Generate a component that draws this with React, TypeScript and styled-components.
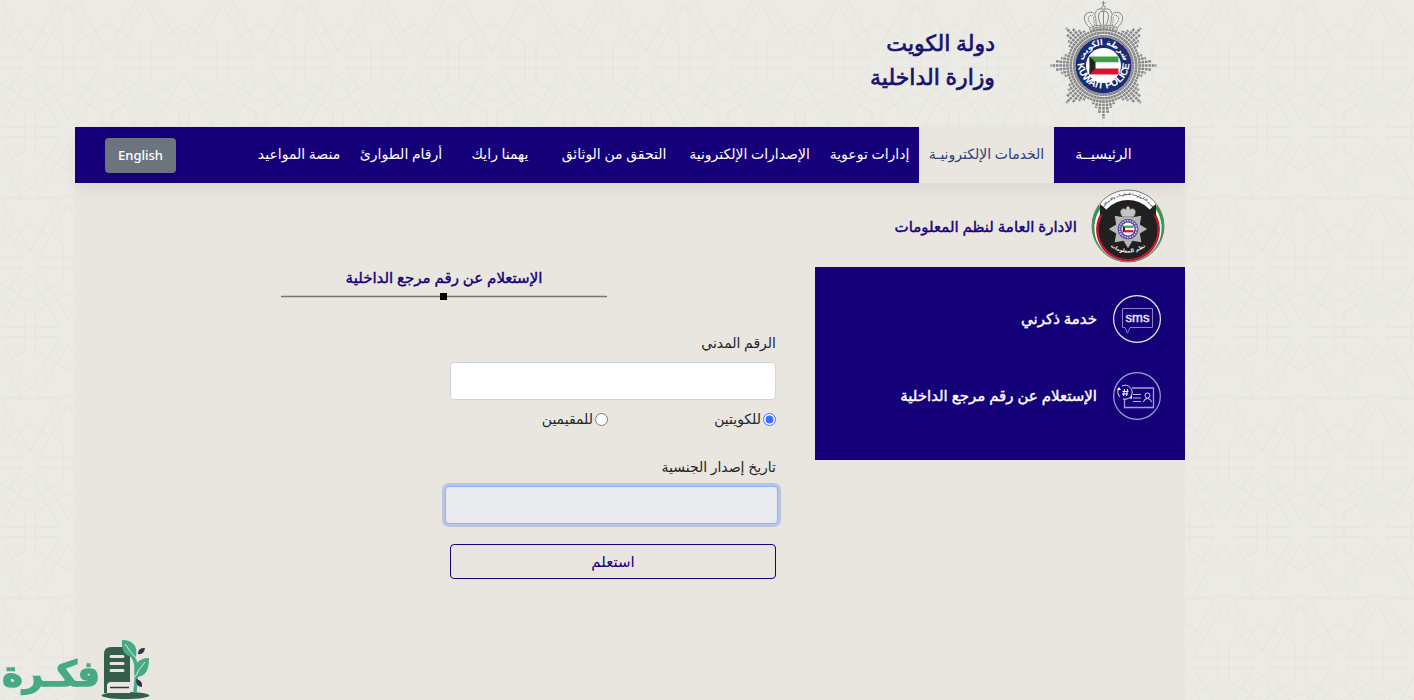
import React from "react";
import styled, { createGlobalStyle } from "styled-components";

const navy = "#15007a";
const fontStack = '"Noto Sans", "DejaVu Sans", sans-serif';

const patternSvg = `<svg xmlns='http://www.w3.org/2000/svg' width='77' height='200' viewBox='0 0 77 200'><g fill='none' stroke='#e4e3dc' stroke-width='1'><path d='M38.500 7L8 59.500H69Z'/><path d='M8 69.500H69L38.500 121Z'/><path d='M38.500 146L8 198.500H69Z'/><path d='M0 76L30 129H-30ZM77 76L107 129H47Z'/><path d='M-30 .5H30L0 53ZM47 .5H107L77 53Z'/><path d='M-30 139H30L0 192ZM47 139H107L77 192Z'/><path d='M0 26L33 45V83L0 103L-33 83V45ZM77 26L110 45V83L77 103L44 83V45Z'/><path d='M38.500 95L72 114V153L38.500 172L5 153V114Z'/></g></svg>`;

const GlobalStyle = createGlobalStyle`
  * { box-sizing: border-box; }
  body {
    margin: 0;
    font-family: ${fontStack};
    font-size: 14px;
    line-height: 24px;
    color: #212529;
    background-color: #ebeae4;
    background-image: url("data:image/svg+xml,${encodeURIComponent(patternSvg)}");
    background-position: 30px -2px;
  }
  button, input { font: inherit; }
`;

const Page = styled.div`
  min-height: 100vh;
  display: flex;
  flex-direction: column;
  padding-inline: 229px 75px;
`;

const Header = styled.header`
  display: flex;
  align-items: flex-start;
  gap: 55px;
  height: 127px;
  padding-inline-start: 28px;
`;

const Ministry = styled.h1`
  margin: 0;
  padding-top: 25px;
  font-size: 22px;
  font-weight: 400;
  -webkit-text-stroke: 0.7px #17126c;
  line-height: 34px;
  color: #17126c;
  white-space: nowrap;
`;

const Navbar = styled.nav`
  display: flex;
  align-items: center;
  height: 56px;
  padding-inline: 32px 30px;
  background: ${navy};
  box-shadow: 0 8px 16px rgba(0, 0, 0, 0.05);
  z-index: 1;
`;

const NavLink = styled.a<{ $width: number; $active?: boolean }>`
  flex: 0 1 ${(p) => p.$width}px;
  height: 56px;
  padding-bottom: 2px;
  display: flex;
  align-items: center;
  justify-content: center;
  color: ${(p) => (p.$active ? "#2b3f78" : "#ffffff")};
  background: ${(p) => (p.$active ? "#e8e6df" : "transparent")};
  text-decoration: none;
  white-space: nowrap;
`;

const LanguageButton = styled.button`
  margin-inline-start: auto;
  width: 71px;
  height: 35px;
  padding: 0;
  border: 0;
  border-radius: 4px;
  background: #6c757d;
  color: #fff;
  font-size: 13px;
  font-weight: 500;
`;

const Panel = styled.main`
  flex: 1;
  display: grid;
  grid-template-columns: 370px 1fr;
  background: #e8e6df;
`;

const Department = styled.div`
  display: flex;
  align-items: center;
  gap: 14px;
  height: 84px;
  padding: 2px 20px 0 0;
`;

const Title = styled.h2`
  margin: 0;
  font-size: 15px;
  font-weight: 400;
  -webkit-text-stroke: 0.4px ${navy};
  color: ${navy};
  white-space: nowrap;
`;

const ServiceList = styled.ul`
  list-style: none;
  margin: 0;
  padding: 28px 24px 40px;
  display: flex;
  flex-direction: column;
  gap: 29px;
  background: ${navy};
`;

const ServiceLink = styled.a`
  display: flex;
  align-items: center;
  gap: 16px;
  color: #fff;
  font-size: 15px;
  text-decoration: none;
  white-space: nowrap;

  span {
    padding-bottom: 2px;
    -webkit-text-stroke: 0.4px #fff;
  }
`;

const Content = styled.section`
  padding-top: 82px;
`;

const Heading = styled.div`
  width: 326px;
  margin-inline-start: 208px;
  display: flex;
  flex-direction: column;
  align-items: center;
`;

const Divider = styled.svg`
  display: block;
  margin-top: 4px;
`;

const Form = styled.form`
  width: 326px;
  margin: 31px 39px 0 0;
  display: flex;
  flex-direction: column;
`;

const Label = styled.label`
  margin-bottom: 7px;
`;

const TextInput = styled.input`
  height: 38px;
  padding: 6px 12px;
  border: 1px solid #ced4da;
  border-radius: 4px;
  background: #fff;
  outline: 0;
`;

const DateInput = styled(TextInput)`
  width: 333px;
  margin-inline-start: -2px;
  border-color: #86b7fe;
  background: #e9eaee;
  box-shadow: 0 0 0 3px #bac5e6;
`;

const Choices = styled.div`
  display: grid;
  grid-template-columns: 168px 1fr;
  margin: 7px 0 24px;
`;

const Choice = styled.label`
  display: flex;
  align-items: center;
  gap: 2px;
`;

const Radio = styled.input`
  width: 13px;
  height: 13px;
  margin: 0;
  accent-color: #3b6cff;
`;

const SubmitButton = styled.button`
  height: 35px;
  margin-top: 20px;
  padding: 0 0 2px;
  border: 1px solid ${navy};
  border-radius: 4px;
  background: transparent;
  color: ${navy};
  font-size: 15px;
`;

const Watermark = styled.div`
  position: fixed;
  left: 0;
  bottom: 0;

  svg {
    display: block;
  }
`;

const rays = Array.from({ length: 72 }, (_, i) => {
  const offset = Math.abs(((i * 5 + 22.5) % 45) - 22.5);
  return { angle: i * 5, length: offset < 2 ? 53 : offset < 7 ? 48 : offset < 12 ? 43 : offset < 17 ? 40 : 37 };
});

function PoliceStar() {
  return (
    <g>
      {rays.map((r) => (
        <line key={r.angle} x1="28" x2={r.length} y1="0" y2="0" transform={`rotate(${r.angle})`} stroke="#85868a" strokeWidth="2.5" strokeDasharray="2.6 .8" />
      ))}
    </g>
  );
}

function Flag() {
  return (
    <g>
      <path d="M-14-9H15V-3H-14Z" fill="#3c9f47" />
      <path d="M-14-3H15V3H-14Z" fill="#fff" />
      <path d="M-14 3H15V9H-14Z" fill="#dc1230" />
      <path d="M-14-9L-8-3V3L-14 9Z" fill="#222" />
    </g>
  );
}

function PoliceEmblem() {
  return (
    <svg width="107" height="127" viewBox="-53.5 -65.500 107 127" role="img" aria-label="شرطة الكويت">
      <defs>
        <path id="policeTop" d="M-20.500 0A20.500 20.500 0 0 1 20.500 0" />
        <path id="policeBottom" d="M-25.500 -8A26 26 0 1 0 25.500 -8" />
      </defs>
      <PoliceStar />
      <path d="M-14-37C-24-47-18-55-9-52C-8-57 8-57 9-52C18-55 24-47 14-37Q0-42-14-37Z" fill="#ebeae4" />
      <g fill="none" stroke="#85868a">
        <path d="M-14-38C-23-46-19-55-11-53C-7-52-8-45-7-40M14-38C23-46 19-55 11-53C7-52 8-45 7-40" />
        <path d="M-11-40C-18-46-15-51-11-50C-9-49-10-44-9-40M11-40C18-46 15-51 11-50C9-49 10-44 9-40" strokeDasharray="1.500 .8" />
        <path d="M-8-52C-8-57-1-59 0-53C1-59 8-57 8-52M-3-41C-8-53-2-56 0-53C2-56 8-53 3-41M0-53V-41" />
        <path d="M-14-38Q0-43 14-38L13-34Q0-38-13-34Z" />
        <path d="M-12-36Q0-40 12-36" strokeDasharray="2 1" />
        <path d="M0-64.500V-60M-2-62.500H2" />
        <circle cy="-58" r="1.800" />
      </g>
      <circle r="28" fill="#1b2b75" />
      <circle r="17.500" fill="#fff" />
      <Flag />
      <g fill="#fff" fontWeight="700" textAnchor="middle">
        <text fontSize="8" fontFamily="DejaVu Sans" direction="rtl"><textPath href="#policeTop" startOffset="50%">شرطة الكويت</textPath></text>
        <text fontSize="10" fontFamily="Liberation Sans" direction="ltr"><textPath href="#policeBottom" startOffset="50%">KUWAIT POLICE</textPath></text>
      </g>
    </svg>
  );
}

function DepartmentEmblem() {
  return (
    <svg width="74" height="74" viewBox="-37 -37 74 74" role="img" aria-label="نظم المعلومات">
      <defs>
        <path id="deptTop" d="M-27-14A30 30 0 0 1 27-14" />
        <path id="deptBottom" d="M-24 13A28 28 0 0 0 24 13" />
      </defs>
      <circle r="36" fill="#fff" stroke="#777" />
      <path d="M-29-21A36 36 0 0 0 0 36A36 36 0 0 0 29-21L24-14H-24Z" fill="#379448" />
      <path d="M-27-18A33.500 33.500 0 0 0 0 35.500A33.500 33.500 0 0 0 27-18L24-14H-24Z" fill="#fff" />
      <path d="M-26-15A32 32 0 0 0 0 35.500A32 32 0 0 0 26-15L22-14H-22Z" fill="#bf1b32" />
      <path d="M-28-22L-20-15L-28-10ZM28-22L20-15L28-10Z" fill="#222" />
      <circle cy="3.500" r="29.500" fill="#211f20" />
      <g transform="translate(0 3) scale(.37)">
        <path d="M0-52L12-32L36-36L32-12L52 0L32 12L36 36L12 32L0 52L-12 32L-36 36L-32 12L-52 0L-32-12L-36-36L-12-32Z" fill="#b6b6b8" />
        <path d="M-15-33C-28-52-12-59-6-52C-4-64 4-64 6-52C12-59 28-52 15-33Z" fill="#c4c4c5" stroke="#888" strokeWidth="2" />
        <circle r="28" fill="#5144a5" />
        <circle r="23" fill="none" stroke="#ddd" strokeWidth="4" strokeDasharray="4 3" />
        <circle r="17.500" fill="#fff" />
        <Flag />
      </g>
      <g textAnchor="middle" fontFamily="DejaVu Sans" fontWeight="700" direction="rtl">
        <text fontSize="3" fill="#222"><textPath href="#deptTop" startOffset="50%">قسم التكنولوجيا للمعلومات والاتصالات</textPath></text>
        <text fontSize="5" fill="#fff"><textPath href="#deptBottom" startOffset="50%">نظم المعلومات</textPath></text>
      </g>
    </svg>
  );
}

function SmsIcon() {
  return (
    <svg width="48" height="48" viewBox="0 0 48 48" fill="none" aria-hidden="true">
      <circle cx="24" cy="24" r="23.400" stroke="#eee" strokeWidth="1.200" />
      <path d="M9.500 13.500H39.500V32.500H17L14.500 38L12 32.500H9.500Z" stroke="#8b80c0" />
      <text x="24.500" y="27" textAnchor="middle" direction="ltr" fill="#eeeaf8" stroke="#eeeaf8" strokeWidth=".4" fontFamily="Liberation Sans" fontSize="13">sms</text>
    </svg>
  );
}

function ReferenceIcon() {
  return (
    <svg width="48" height="48" viewBox="0 0 48 48" fill="none" aria-hidden="true">
      <circle cx="24" cy="24" r="23.300" stroke="#a79fd2" strokeWidth="1.200" />
      <path d="M19 16H40.500V35.500H11.500V27" stroke="#a79fd2" strokeWidth="1.300" />
      <path d="M7 25A7 7 0 0 1 6 16M9 14A7 7 0 0 1 18 24M10 27Q13 28 16 26" stroke="#ddd8f0" />
      <path d="M4 18L6 15L8 18ZM16 26L19 23V27Z" fill="#fff" />
      <path d="M11.500 17L10.500 24M14.500 17L13.500 24M9.500 19.500H15.500M9 22H15" stroke="#fff" />
      <path d="M20 22.500H28M20 26H28M20 29.500H28" stroke="#bcb5de" />
      <circle cx="34.500" cy="23.500" r="2.500" stroke="#ddd8f0" />
      <path d="M30.500 30Q31 26.500 34.500 26.500T38.500 30" stroke="#ddd8f0" />
    </svg>
  );
}

function FikraLogo() {
  return (
    <svg width="152" height="64" viewBox="0 0 152 64" role="img" aria-label="فكرة">
      <text x="51" y="50" textAnchor="middle" direction="rtl" fontFamily="DejaVu Sans" fontWeight="700" fontSize="35" fill="#47aa87" stroke="#47aa87" strokeWidth="1.500">فكـرة</text>
      <ellipse cx="125.500" cy="59.500" rx="24" ry="3.500" fill="#365e4d" />
      <path d="M104 57V18Q104 11 111 11H130V46H111Q107 46 107 50V57Z" fill="#365e4d" />
      <path d="M107 53Q107 47 113 47H130V57H111Q107 57 107 53Z" fill="#e8e6df" />
      <path d="M110 51.500H129" stroke="#30364f" strokeWidth="1.500" />
      <path d="M111 20.500H123M111 27.500H123M111 34.500H123" stroke="#e8e6df" strokeWidth="3" strokeLinecap="round" />
      <path d="M135 56Q137 43 136 30Q136 24 130 17" fill="none" stroke="#47aa87" strokeWidth="3.500" />
      <path d="M122 4C134 4 138 11 136 21C127 22 121 17 122 4ZM149 22C137 22 133 30 135 41C146 41 149 34 149 22Z" fill="#47aa87" />
      <path d="M125 8Q130 16 136 22M145 26Q138 34 135 41" fill="none" stroke="#e8e6df" />
      <path d="M145 12Q138 11 138 18Q144 19 145 12ZM136 43Q143 44 142 51Q136 51 136 43Z" fill="#30364f" />
    </svg>
  );
}

const links = [
  { text: "الرئيسيــة", width: 99 },
  { text: "الخدمات الإلكترونيـة", width: 135, active: true },
  { text: "إدارات توعوية", width: 99 },
  { text: "الإصدارات الإلكترونية", width: 141 },
  { text: "التحقق من الوثائق", width: 130 },
  { text: "يهمنا رايك", width: 98 },
  { text: "أرقام الطوارئ", width: 100 },
  { text: "منصة المواعيد", width: 104 },
];

export default function App() {
  return (
    <>
      <GlobalStyle />
      <Page dir="rtl" lang="ar">
        <Header>
          <PoliceEmblem />
          <Ministry>دولة الكويت<br />وزارة الداخلية</Ministry>
        </Header>
        <Navbar>
          {links.map((l) => (
            <NavLink key={l.text} href="#" $width={l.width} $active={l.active}>{l.text}</NavLink>
          ))}
          <LanguageButton type="button">English</LanguageButton>
        </Navbar>
        <Panel>
          <aside>
            <Department>
              <DepartmentEmblem />
              <Title>الادارة العامة لنظم المعلومات</Title>
            </Department>
            <ServiceList>
              <li><ServiceLink href="#"><SmsIcon /><span>خدمة ذكرني</span></ServiceLink></li>
              <li><ServiceLink href="#"><ReferenceIcon /><span>الإستعلام عن رقم مرجع الداخلية</span></ServiceLink></li>
            </ServiceList>
          </aside>
          <Content>
            <Heading>
              <Title>الإستعلام عن رقم مرجع الداخلية</Title>
              <Divider width="326" height="7" viewBox="0 0 326 7" aria-hidden="true">
                <path d="M0 3.500H326" stroke="#77756f" strokeWidth="1.500" />
                <path d="M159 0H166V7H159Z" />
              </Divider>
            </Heading>
            <Form onSubmit={(e) => e.preventDefault()}>
              <Label htmlFor="civil">الرقم المدني</Label>
              <TextInput id="civil" type="text" />
              <Choices>
                <Choice><Radio type="radio" name="kind" defaultChecked />للكويتين</Choice>
                <Choice><Radio type="radio" name="kind" />للمقيمين</Choice>
              </Choices>
              <Label htmlFor="issued">تاريخ إصدار الجنسية</Label>
              <DateInput id="issued" type="text" readOnly />
              <SubmitButton type="submit">استعلم</SubmitButton>
            </Form>
          </Content>
        </Panel>
        <Watermark><FikraLogo /></Watermark>
      </Page>
    </>
  );
}
